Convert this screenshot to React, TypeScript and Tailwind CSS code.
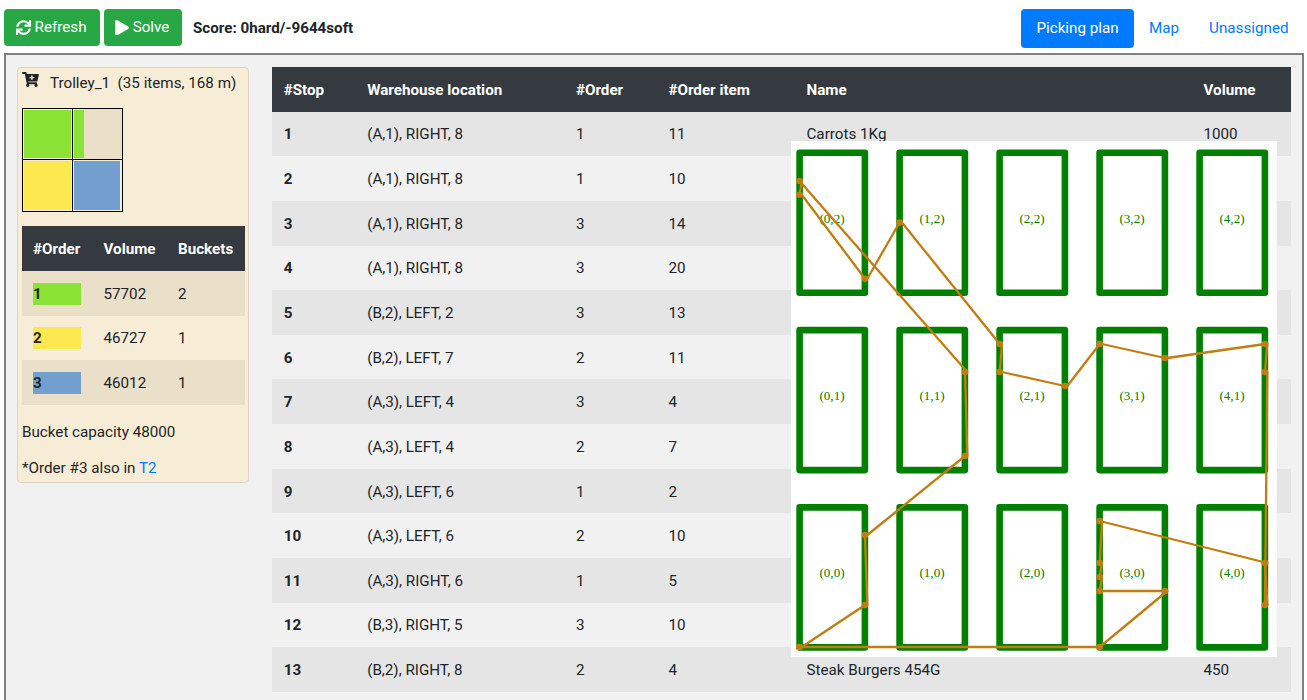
import { FaCartPlus, FaPlay, FaSync } from "react-icons/fa";

const stops: [string, string, number, number, string, string][] = [
  ["1", "(A,1), RIGHT, 8", 1, 11, "Carrots 1Kg", "1000"],
  ["2", "(A,1), RIGHT, 8", 1, 10, "", ""],
  ["3", "(A,1), RIGHT, 8", 3, 14, "", ""],
  ["4", "(A,1), RIGHT, 8", 3, 20, "", ""],
  ["5", "(B,2), LEFT, 2", 3, 13, "", ""],
  ["6", "(B,2), LEFT, 7", 2, 11, "", ""],
  ["7", "(A,3), LEFT, 4", 3, 4, "", ""],
  ["8", "(A,3), LEFT, 4", 2, 7, "", ""],
  ["9", "(A,3), LEFT, 6", 1, 2, "", ""],
  ["10", "(A,3), LEFT, 6", 2, 10, "", ""],
  ["11", "(A,3), RIGHT, 6", 1, 5, "", ""],
  ["12", "(B,3), RIGHT, 5", 3, 10, "", ""],
  ["13", "(B,2), RIGHT, 8", 2, 4, "Steak Burgers 454G", "450"],
];

const orders = [
  { id: 1, volume: 57702, buckets: 2, color: "bg-[#8ae234]" },
  { id: 2, volume: 46727, buckets: 1, color: "bg-[#fce94f]" },
  { id: 3, volume: 46012, buckets: 1, color: "bg-[#729fcf]" },
];

const route: [number, number][] = [
  [8.5, 506], [74, 464], [74, 394], [174, 315], [174, 231], [8.5, 40], [8.5, 53.7],
  [74, 137.7], [108.6, 81.5], [208.7, 203], [208.7, 231], [274, 245], [308.7, 203],
  [374, 217], [474, 203], [474, 231], [474, 464], [474, 422], [308.7, 380],
  [308.7, 422], [308.7, 436], [308.7, 450], [374, 450], [308.7, 506], [8.5, 506],
];

function WarehouseMap() {
  return (
    <svg className="block h-[516px] w-[486px] bg-white" viewBox="0 0 486 516">
      {[2, 1, 0].map((row, r) =>
        [0, 1, 2, 3, 4].map((col) => (
          <g key={`${col}-${row}`}>
            <rect
              x={8.6 + col * 100}
              y={11.8 + r * 177.3}
              width={65.3}
              height={140}
              fill="none"
              stroke="#008000"
              strokeWidth={6.6}
              strokeLinejoin="round"
            />
            <text
              x={41 + col * 100}
              y={81.7 + r * 177.3}
              fill="#008000"
              fontSize={13.1}
              fontFamily="Liberation Serif, serif"
              textAnchor="middle"
            >
              ({col},{row})
            </text>
          </g>
        )),
      )}
      {route.slice(1).map(([x, y], i) => (
        <line
          key={i}
          x1={route[i][0] + 2.3}
          y1={route[i][1]}
          x2={x}
          y2={y}
          stroke="#c17d11"
          strokeWidth={2.3}
          strokeLinecap="round"
        />
      ))}
      {route.map(([x, y], i) => (
        <circle key={i} cx={x} cy={y} r={3.3} fill="#c17d11" />
      ))}
    </svg>
  );
}

function Trolley() {
  return (
    <aside className="h-[416px] w-[232px] shrink-0 rounded-[4px] border border-[#e0d5c0] bg-[#f7ecd5] px-[4px]">
      <div className="flex h-[40px] pt-[4px]">
        <FaCartPlus className="h-[15px] w-[17px]" />
        <span className="ml-[11px] whitespace-pre">Trolley_1  (35 items, 168 m)</span>
      </div>
      <div className="grid h-[103.5px] w-[101px] grid-cols-2 grid-rows-2 gap-px border border-black bg-black">
        <div className="bg-[#f7ecd5] p-px">
          <div className="h-full bg-[#8ae234]" />
        </div>
        <div className="bg-[#eadfc9] p-px">
          <div className="h-full w-[10px] bg-[#8ae234]" />
        </div>
        <div className="bg-[#f7ecd5] p-px">
          <div className="h-full w-[47px] bg-[#fce94f]" />
        </div>
        <div className="bg-[#f7ecd5] p-px">
          <div className="h-full w-[46px] bg-[#729fcf]" />
        </div>
      </div>
      <div className="mt-[14.5px] w-[223px]">
        <div className="grid h-[45px] grid-cols-[70.5px_74.5px_1fr] items-center bg-[#343a40] pl-[11px] pt-px font-bold text-white">
          <span>#Order</span>
          <span>Volume</span>
          <span>Buckets</span>
        </div>
        {orders.map((o) => (
          <div
            key={o.id}
            className="grid h-[44.6px] grid-cols-[70.5px_74.5px_1fr] items-center pl-[11px] pt-px even:bg-[#eadfc9]"
          >
            <span className={`h-[22px] w-[48px] font-bold leading-[22px] ${o.color}`}>{o.id}</span>
            <span>{o.volume}</span>
            <span>{o.buckets}</span>
          </div>
        ))}
      </div>
      <p className="mt-[16.2px]">Bucket capacity 48000</p>
      <p className="mt-[14px]">
        *Order #3 also in <a className="text-[#007bff]">T2</a>
      </p>
    </aside>
  );
}

const columns = "grid grid-cols-[83.5px_208.8px_92.5px_138px_397px_1fr] items-center pl-[12.2px] pt-px";

export default function App() {
  return (
    <div className="flex h-[700px] w-[1307px] flex-col overflow-hidden bg-white pl-[4px] pr-[3px] font-[Roboto,sans-serif] text-[15.2px] leading-[22px] text-[#212529]">
      <header className="flex h-[53px] shrink-0 items-start pt-[9px]">
        <button className="flex h-[36.5px] w-[95.5px] items-center justify-center gap-[3.5px] rounded-[4px] bg-[#28a745] pr-px text-white">
          <FaSync className="size-[15.2px]" />
          Refresh
        </button>
        <button className="ml-[4px] flex h-[36.5px] w-[78.5px] items-center justify-center gap-[3.5px] rounded-[4px] bg-[#28a745] pr-px text-white">
          <FaPlay className="h-[15.5px] w-[14px]" />
          Solve
        </button>
        <span className="ml-[11px] mt-[8px] font-bold">Score: 0hard/-9644soft</span>
        <nav className="ml-auto flex h-[38.5px] items-center text-[#007bff]">
          <a className="flex h-full w-[113px] items-center justify-center rounded-[4px] bg-[#007bff] text-white">Picking plan</a>
          <a className="px-[15px]">Map</a>
          <a className="pl-[15px] pr-[15.5px]">Unassigned</a>
        </nav>
      </header>
      <main className="flex h-[680px] shrink-0 gap-[22.5px] border-2 border-[#808080] bg-[#f1f1f1] pl-[11px] pr-[11px] pt-[12px]">
        <Trolley />
        <section className="relative w-[1019px]">
          <div className={`${columns} h-[44.6px] bg-[#343a40] font-bold text-white`}>
            <span>#Stop</span>
            <span>Warehouse location</span>
            <span>#Order</span>
            <span>#Order item</span>
            <span>Name</span>
            <span>Volume</span>
          </div>
          {stops.map(([stop, location, order, item, name, volume]) => (
            <div key={stop} className={`${columns} h-[44.65px] even:bg-[#e5e5e5]`}>
              <span className="font-bold">{stop}</span>
              <span>{location}</span>
              <span>{order}</span>
              <span>{item}</span>
              <span>{name}</span>
              <span>{volume}</span>
            </div>
          ))}
          <div className="absolute left-[519px] top-[74px]">
            <WarehouseMap />
          </div>
        </section>
      </main>
    </div>
  );
}
